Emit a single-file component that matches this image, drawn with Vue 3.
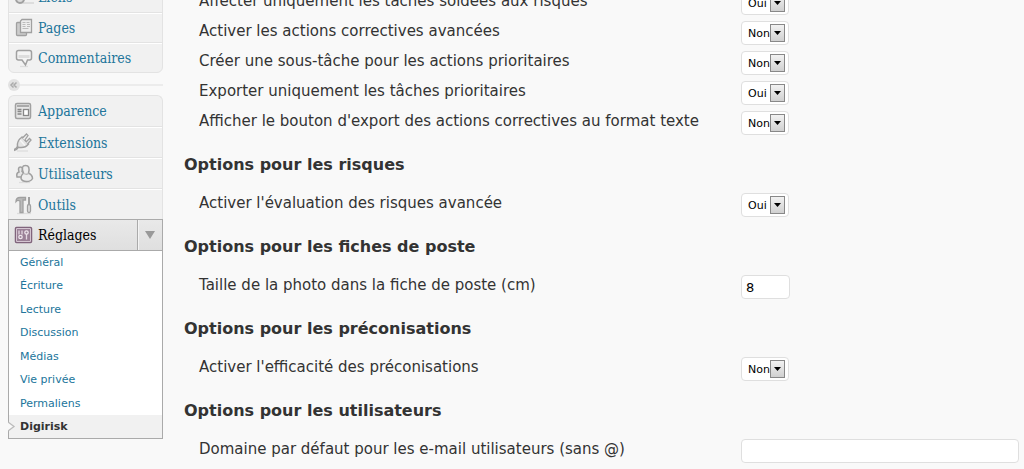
<script setup>
import { ref } from 'vue'

const topMenu = [
  { label: 'Liens', icon: 'links' },
  { label: 'Pages', icon: 'pages' },
  { label: 'Commentaires', icon: 'comments' }
]
const adminMenu = [
  { label: 'Apparence', icon: 'appearance' },
  { label: 'Extensions', icon: 'plugins' },
  { label: 'Utilisateurs', icon: 'users' },
  { label: 'Outils', icon: 'tools' }
]
const groups = [topMenu, adminMenu]
const submenu = ['Général', 'Écriture', 'Lecture', 'Discussion', 'Médias', 'Vie privée', 'Permaliens', 'Digirisk']

const sections = ref([
  {
    title: '',
    rows: [
      { id: 'soldees', label: 'Affecter uniquement les tâches soldées aux risques', type: 'select', value: 'Oui' },
      { id: 'correctives', label: 'Activer les actions correctives avancées', type: 'select', value: 'Non' },
      { id: 'sous-tache', label: 'Créer une sous-tâche pour les actions prioritaires', type: 'select', value: 'Non' },
      { id: 'export', label: 'Exporter uniquement les tâches prioritaires', type: 'select', value: 'Oui' },
      { id: 'export-texte', label: "Afficher le bouton d'export des actions correctives au format texte", type: 'select', value: 'Non' }
    ]
  },
  {
    title: 'Options pour les risques',
    rows: [{ id: 'evaluation', label: "Activer l'évaluation des risques avancée", type: 'select', value: 'Oui' }]
  },
  {
    title: 'Options pour les fiches de poste',
    rows: [{ id: 'photo', label: 'Taille de la photo dans la fiche de poste (cm)', type: 'short', value: '8' }]
  },
  {
    title: 'Options pour les préconisations',
    rows: [{ id: 'efficacite', label: "Activer l'efficacité des préconisations", type: 'select', value: 'Non' }]
  },
  {
    title: 'Options pour les utilisateurs',
    rows: [{ id: 'domaine', label: 'Domaine par défaut pour les e-mail utilisateurs (sans @)', type: 'text', value: '' }]
  }
])
</script>

<template>
  <div class="layout">
    <nav class="sidebar">
      <template v-for="(group, g) in groups" :key="g">
        <div v-if="g === 1" class="separator">
          <button class="fold" aria-label="Réduire le menu">
            <svg viewBox="0 0 12 12" width="12" height="12"><circle cx="6" cy="6" r="6" fill="#e2e2e2" /><path d="M5.500 3.500 3 6l2.500 2.500M8.500 3.500 6 6l2.500 2.500" fill="none" stroke="#aaa" stroke-width="1.500" /></svg>
          </button>
        </div>
        <ul class="menu" :class="{ open: g === 1 }">
          <li v-for="item in group" :key="item.label">
            <a href="#" class="item">
              <svg class="icon" viewBox="0 0 20 20" width="20" height="20" fill="none" stroke="#a0a0a0" stroke-width="1.300">
                <g v-if="item.icon === 'links'">
                  <path d="M7 16h13" stroke="#ddd" stroke-width="2" />
                  <circle cx="6" cy="12" r="4" fill="#ddd" stroke-width="2" />
                  <path d="M9 10h6" />
                </g>
                <g v-else-if="item.icon === 'pages'">
                  <path d="M6.500 4.500H3.500q-1 0-1 1v11q0 1 1 1h8q1 0 1-1V15" fill="#ccc" />
                  <path d="M8 1.500h9.500V14.500H6.500V3z" fill="#eee" />
                  <path d="M8.500 4.500h3M12.500 4.500h3M8.500 6.500h3M13 6.500h3M8.500 8.500h3M13 8.500h3M8.500 10.500h6" stroke="#bbb" stroke-width="1" />
                </g>
                <g v-else-if="item.icon === 'comments'">
                  <path d="M6 18.500h8" stroke="#ddd" />
                  <path d="M4.500 2.500h11q2 0 2 2v5.500q0 2-2 2h-2L11.500 17 8 12H4.500q-2 0-2-2V4.500q0-2 2-2z" fill="#f4f4f4" stroke-width="1.500" />
                  <path d="M4.500 7h11v3h-11z" fill="#ddd" stroke="none" />
                </g>
                <g v-else-if="item.icon === 'appearance'">
                  <rect x="1.500" y="2.500" width="15" height="15" rx="1.500" fill="#e6e6e6" stroke-width="1.500" />
                  <path d="M3 5h12" stroke="#aaa" stroke-width="2" />
                  <path d="M3.500 8.500h4M3.500 10.500h4M3.500 13h4" stroke="#888" />
                  <rect x="9.500" y="8.500" width="5" height="6" fill="#fff" stroke="#888" />
                </g>
                <g v-else-if="item.icon === 'plugins'">
                  <path d="M3 18h11" stroke="#ddd" />
                  <path d="M0 17q2 0 4-3" stroke-width="2.500" />
                  <path d="M3.500 14q-1-6 4.500-10l6.500 7q-4 5-11 3z" fill="#e4e4e4" stroke-width="1.500" />
                  <path d="m8.500 5 4-4 1.500 1.500-3.500 5M12 9l3.500-3.500L17 7l-3.500 4" fill="#eee" />
                  <path d="m6 7 5 5.500" stroke="#f6f6f6" />
                </g>
                <g v-else-if="item.icon === 'users'">
                  <path d="M5 18.500h11" stroke="#ddd" />
                  <path d="M3 13q-1-4 2-5-1.500-5 1.500-5T8 7.500q3 2 2 5.500z" fill="#e6e6e6" stroke-width="1.500" />
                  <path d="M9.500 9q-3-7.500 2-7.500t3 7.500q4 2 4 5.500-1.500 3-6 3T7 14.500Q7 11 9.500 9z" fill="#eee" stroke-width="1.500" />
                  <path d="M9.500 9.500q3 1.500 5 0" stroke="#bbb" />
                </g>
                <g v-else>
                  <path d="M3 18.500h14" stroke="#ddd" />
                  <path d="M2 6.500q0-4 4-4h5.500v2.500H9V17.500H6V6Q3.500 4.500 2 6.500z" fill="#bbb" />
                  <path d="M15 2v7" stroke-width="2" />
                  <rect x="13.500" y="9.500" width="3" height="8" rx="1.500" fill="#ddd" />
                </g>
              </svg>
              <span>{{ item.label }}</span>
            </a>
          </li>
          <li v-if="g === 1" class="current">
            <div class="current-head">
              <a href="#" class="item">
                <svg class="icon" viewBox="0 0 20 20" width="20" height="20">
                  <rect x="1.500" y="2.500" width="16" height="15" rx="1" fill="#f0e6ee" stroke="#80647c" stroke-width="1.500" />
                  <rect x="3" y="4" width="13" height="12" fill="#9a8096" />
                  <path d="M5 5.500v4M8 5.500v4M12.500 9v5.500" stroke="#e4d8e2" stroke-width="1.300" />
                  <circle cx="6.500" cy="12" r="1.700" fill="none" stroke="#efe6ed" stroke-width="1.300" />
                  <circle cx="12.500" cy="7.500" r="1.700" fill="none" stroke="#efe6ed" stroke-width="1.300" />
                </svg>
                <span>Réglages</span>
              </a>
              <button class="toggle" aria-label="Replier Réglages">
                <svg viewBox="0 0 10 8" width="10" height="8"><path d="M0 0h10L5 8z" fill="#999" /></svg>
              </button>
            </div>
            <ul class="submenu">
              <li v-for="name in submenu" :key="name" :class="{ active: name === 'Digirisk' }">
                <svg v-if="name === 'Digirisk'" class="notch" viewBox="0 0 8 12" width="8" height="12"><path d="M0 1 6 5.500 0 10" fill="#f9f9f9" stroke="#bbb" stroke-width="1.300" /></svg>
                <a href="#">{{ name }}</a>
              </li>
            </ul>
          </li>
        </ul>
      </template>
    </nav>

    <main class="content">
      <form @submit.prevent>
        <section v-for="section in sections" :key="section.title">
          <h2 v-if="section.title">{{ section.title }}</h2>
          <div v-for="row in section.rows" :key="row.id" class="row">
            <label :for="row.id">{{ row.label }}</label>
            <div class="field">
              <span v-if="row.type === 'select'" class="select">
                <select :id="row.id" v-model="row.value">
                  <option>Oui</option>
                  <option>Non</option>
                </select>
                <svg class="arrow" viewBox="0 0 15 18" width="15" height="18">
                  <defs>
                    <linearGradient :id="'g-' + row.id" x1="0" y1="0" x2="0" y2="1">
                      <stop offset="0" stop-color="#f3f3f3" />
                      <stop offset="1" stop-color="#cfcfcf" />
                    </linearGradient>
                  </defs>
                  <rect x=".5" y=".5" width="14" height="17" :fill="`url(#g-${row.id})`" stroke="#888" />
                  <path d="M4 7h7l-3.500 4z" fill="#000" />
                </svg>
              </span>
              <input v-else :id="row.id" v-model="row.value" type="text" :class="row.type" />
            </div>
          </div>
        </section>
      </form>
    </main>
  </div>
</template>

<style>
body {
  background: #f9f9f9;
  overflow: hidden;
}
</style>

<style scoped>
.layout {
  display: flex;
  gap: 21px;
  padding: 0 5px 0 8px;
  color: #333;
  font-family: "DejaVu Sans", Verdana, sans-serif;
}

ul {
  list-style: none;
  margin: 0;
  padding: 0;
}

a {
  color: #21759b;
  text-decoration: none;
}

button {
  border: 0;
  padding: 0;
  background: none;
}

.sidebar {
  flex: 0 0 155px;
  margin-top: -19px;
}

.menu {
  border: 1px solid #e3e3e3;
  border-radius: 6px;
  background: #f1f1f1;
}

.menu.open {
  border-bottom: 0;
}

.menu > li + li:not(.current) {
  border-top: 1px solid #e3e3e3;
}

.menu > li + li:not(.current) .item {
  border-top: 1px solid #fff;
  height: 29px;
}

.menu.open > li + li:not(.current) .item {
  height: 30px;
}

.item {
  display: flex;
  align-items: center;
  gap: 4px;
  box-sizing: border-box;
  height: 30px;
  padding-left: 5px;
  font-family: "DejaVu Serif Condensed", "DejaVu Serif", Georgia, serif;
  font-size: 14px;
  line-height: 24px;
}

.icon {
  flex: none;
}

.separator {
  display: flex;
  align-items: center;
  height: 12px;
  margin: 6px 0 4px;
}

.separator::after {
  content: "";
  flex: 1;
  height: 2px;
  background: #ececec;
}

.fold {
  display: flex;
}

.current {
  margin: 0 -1px;
  border: 1px solid #aaa;
  background: #fff;
}

.current-head {
  display: flex;
  border-bottom: 1px solid #aaa;
  background: linear-gradient(#e9e9e9, #dfdfdf);
}

.current-head .item {
  flex: 1;
  color: #000;
}

.toggle {
  display: flex;
  align-items: center;
  justify-content: center;
  width: 25px;
  border-left: 1px solid #aaa;
  box-shadow: inset 1px 0 #f4f4f4;
}

.submenu li {
  position: relative;
  padding-left: 11px;
  font-size: 11px;
  line-height: 23px;
}

.submenu li:nth-child(even):not(:last-child) {
  margin-bottom: 1px;
}

.submenu .active {
  background: #f1f1f1;
  font-weight: bold;
}

.active a {
  color: #333;
}

.notch {
  position: absolute;
  left: -1px;
  top: 6px;
}

.content {
  flex: 1;
  min-width: 0;
  margin-top: -9px;
}

h2 {
  margin: 14px 0 18px;
  font-size: 16px;
  line-height: 20px;
}

.row {
  display: grid;
  grid-template-columns: 542fr 278fr;
  align-items: start;
  min-height: 30px;
  padding-left: 15px;
}

label {
  font-size: 15px;
  line-height: 20px;
}

.field {
  display: flex;
}

.select {
  position: relative;
  display: flex;
}

select,
input {
  appearance: none;
  box-sizing: border-box;
  height: 24px;
  margin: 0;
  border: 1px solid #dfdfdf;
  border-radius: 4px;
  background: #fff;
  color: #000;
  font: 11px "DejaVu Sans", Verdana, sans-serif;
}

select {
  width: 48px;
  padding: 0 0 0 6px;
}

input {
  width: 100%;
  padding: 0 4px;
  font-size: 13px;
}

.short {
  width: 49px;
}

.arrow {
  position: absolute;
  top: 3px;
  right: 4px;
  pointer-events: none;
}
</style>
